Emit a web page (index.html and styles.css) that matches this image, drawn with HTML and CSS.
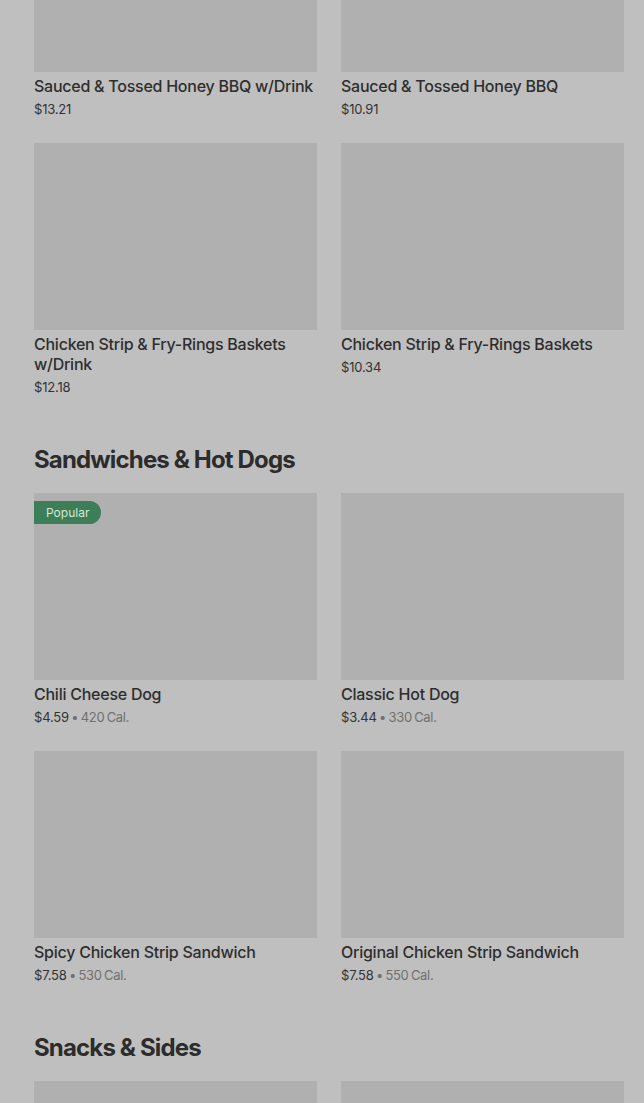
FILE: index.html
```html
<!DOCTYPE html>
<html>
<head>
<meta charset="UTF-8">
<title>Menu</title>
<link rel="stylesheet" href="styles.css">
</head>
<body>
  <main class="menu">
    <section class="category">
      <div class="grid">
        <div class="item">
          <div class="photo"></div>
          <div class="name">Sauced &amp; Tossed Honey BBQ w/Drink</div>
          <div class="meta">$13.21</div>
        </div>
        <div class="item">
          <div class="photo"></div>
          <div class="name">Sauced &amp; Tossed Honey BBQ</div>
          <div class="meta">$10.91</div>
        </div>
        <div class="item">
          <div class="photo"></div>
          <div class="name">Chicken Strip &amp; Fry-Rings Baskets w/Drink</div>
          <div class="meta">$12.18</div>
        </div>
        <div class="item">
          <div class="photo"></div>
          <div class="name">Chicken Strip &amp; Fry-Rings Baskets</div>
          <div class="meta">$10.34</div>
        </div>
      </div>
    </section>

    <section class="category">
      <h2>Sandwiches &amp; Hot Dogs</h2>
      <div class="grid">
        <div class="item">
          <div class="photo"><span class="badge">Popular</span></div>
          <div class="name">Chili Cheese Dog</div>
          <div class="meta">$4.59 <span class="cal">• 420 Cal.</span></div>
        </div>
        <div class="item">
          <div class="photo"></div>
          <div class="name">Classic Hot Dog</div>
          <div class="meta">$3.44 <span class="cal">• 330 Cal.</span></div>
        </div>
        <div class="item">
          <div class="photo"></div>
          <div class="name">Spicy Chicken Strip Sandwich</div>
          <div class="meta">$7.58 <span class="cal">• 530 Cal.</span></div>
        </div>
        <div class="item">
          <div class="photo"></div>
          <div class="name">Original Chicken Strip Sandwich</div>
          <div class="meta">$7.58 <span class="cal">• 550 Cal.</span></div>
        </div>
      </div>
    </section>

    <section class="category">
      <h2>Snacks &amp; Sides</h2>
      <div class="grid">
        <div class="item">
          <div class="photo"></div>
        </div>
        <div class="item">
          <div class="photo"></div>
        </div>
      </div>
    </section>
  </main>
</body>
</html>
```

FILE: styles.css
```css
/* Page, dimmed behind an overlay */
html, body {
  margin: 0;
  padding: 0;
  overflow: hidden;
}
body {
  background: #bfbfbf;
  color: #2e2e2e;
  font-family: Inter, "Noto Sans", sans-serif;
}

/* scrolled part-way down the store page */
.menu {
  margin-top: -115px;
  padding: 0 20px 0 34px;
}

.category + .category {
  margin-top: 47px;
}
.category h2 {
  margin: 0 0 17px;
  font-size: 24px;
  line-height: 32px;
  font-weight: 700;
  letter-spacing: -0.85px;
  color: #2c2c2c;
}

.grid {
  display: grid;
  grid-template-columns: minmax(0, 1fr) minmax(0, 1fr);
  gap: 24px;
}

.item .photo {
  position: relative;
  height: 187px;
  background: #b0b0b0;
}
.item .name {
  margin-top: 4px;
  font-size: 16px;
  line-height: 20px;
  font-weight: 500;
  letter-spacing: -0.25px;
}
.item .meta {
  margin-top: 3px;
  font-size: 13px;
  line-height: 20px;
  color: #333;
  letter-spacing: -0.2px;
  word-spacing: -1px;
}
.item .meta .cal {
  color: #707070;
  letter-spacing: -0.3px;
}

.badge {
  position: absolute;
  top: 8px;
  left: 0;
  padding: 0 12px;
  height: 23px;
  line-height: 23px;
  font-size: 12px;
  color: #d6e6da;
  background: #3c7e58;
  border-radius: 0 12px 12px 0;
}
```
